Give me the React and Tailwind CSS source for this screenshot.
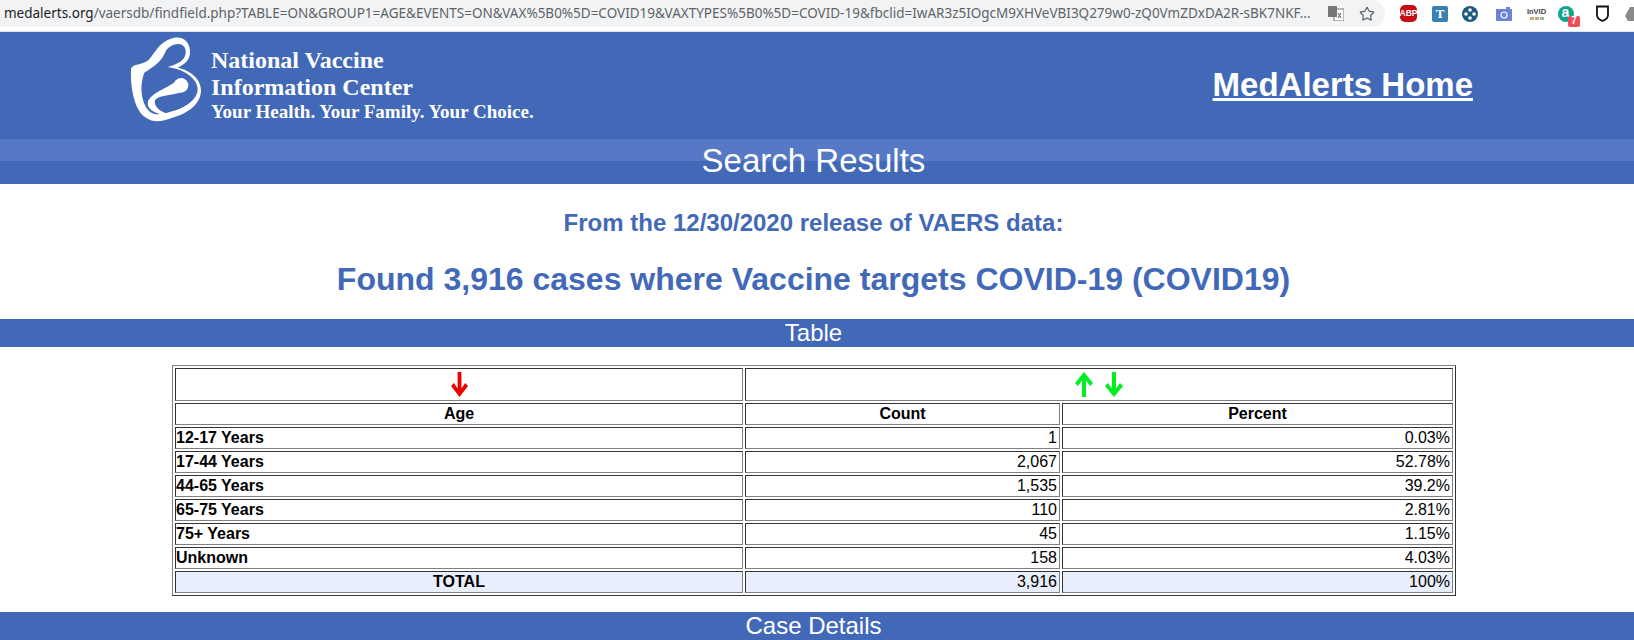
import { Star } from 'lucide-react';

const rows = [
  { age: '12-17 Years', count: '1', percent: '0.03%' },
  { age: '17-44 Years', count: '2,067', percent: '52.78%' },
  { age: '44-65 Years', count: '1,535', percent: '39.2%' },
  { age: '65-75 Years', count: '110', percent: '2.81%' },
  { age: '75+ Years', count: '45', percent: '1.15%' },
  { age: 'Unknown', count: '158', percent: '4.03%' },
];

const cell = 'border border-t-[#333333] border-l-[#333333] border-r-[#808080] border-b-[#808080] py-0 h-[22px] text-[16px] leading-[18px] text-black';

const Arrow = ({ color, down, narrow }) => (
  <svg width={narrow ? 17 : 18} height="25" viewBox="0 0 18 25" preserveAspectRatio="none" className={down ? 'rotate-180' : ''}>
    <polygon points="9,0 18,11 15,14 11,8.5 11,25 7,25 7,8.5 3,14 0,11" fill={color} />
  </svg>
);

// NVIC mother and child logo
const Logo = () => (
  <svg width="85" height="92" viewBox="0 0 255 276" className="shrink-0">
    <path
      fill="#ffffff"
      fillRule="evenodd"
      d="M18 110 C25 95 50 100 70 85 C90 65 100 30 145 18 C175 12 195 30 195 60 C195 85 180 95 158 107 C195 115 228 140 228 175 C228 215 190 245 140 258 C110 270 80 272 60 255 C30 235 15 170 18 110 Z M58 122 C78 108 108 92 120 62 C128 42 155 32 170 38 C186 46 186 70 172 84 C160 96 140 100 128 106 C175 110 218 140 218 172 C218 200 185 228 135 240 C115 246 95 250 80 243 C52 225 40 170 58 122 Z"
    />
    <path fill="#ffffff" d="M150 150 C120 172 85 180 70 205 C60 232 95 252 145 250 C115 245 85 228 90 205 C97 190 135 192 172 180 Z" />
    <circle cx="168" cy="160" r="22" fill="#ffffff" />
  </svg>
);

const Toolbar = () => (
  <div className="flex h-[32px] items-start bg-white border-b border-[#e3e5e8]">
    <div className="flex h-[27px] w-[1385px] shrink-0 items-center rounded-r-full bg-[#f1f3f4] pl-[4px] text-[13.5px] font-['Noto_Sans',sans-serif] text-[#5f6368] whitespace-nowrap">
      <span className="w-[1308px] shrink-0">
        <span className="text-[#202124]">medalerts.org</span>/vaersdb/findfield.php?TABLE=ON&amp;GROUP1=AGE&amp;EVENTS=ON&amp;VAX%5B0%5D=COVID19&amp;VAXTYPES%5B0%5D=COVID-19&amp;fbclid=IwAR3z5IOgcM9XHVeVBI3Q279w0-zQ0VmZDxDA2R-sBK7NKF...
      </span>
      {/* translate icon */}
      <svg width="16" height="15" viewBox="0 0 16 15" className="ml-[16px] shrink-0">
        <rect x="6" y="3" width="10" height="12" fill="#ffffff" stroke="#777777" />
        <rect x="0" y="0" width="9" height="11" fill="#777777" />
        <path d="M10 7 L13 12 M13 7 L10 12" stroke="#777777" strokeWidth="1.2" />
      </svg>
      <Star size={16} strokeWidth={1.8} className="ml-[15px] shrink-0 text-[#5f6368]" />
    </div>
    <div className="relative flex h-[27px] items-center">
      {/* AdBlock Plus */}
      <div className="ml-[15px] flex h-[17px] w-[17px] items-center justify-center rounded-[5px] bg-[#c70d18] font-['Liberation_Sans',sans-serif] text-[8.5px] font-bold text-white">ABP</div>
      {/* T extension */}
      <div className="ml-[15px] flex h-[16px] w-[16px] items-center justify-center rounded-[2px] bg-[#3b80b5] font-['Liberation_Serif',serif] text-[13px] font-bold text-white">T</div>
      {/* round dots */}
      <svg width="16" height="16" viewBox="0 0 16 16" className="ml-[14px]">
        <circle cx="8" cy="8" r="8" fill="#1d5a80" />
        <circle cx="8" cy="4" r="1.8" fill="#ffffff" />
        <circle cx="8" cy="12" r="1.8" fill="#ffffff" />
        <circle cx="4" cy="8" r="1.8" fill="#ffffff" />
        <circle cx="12" cy="8" r="1.8" fill="#ffffff" />
      </svg>
      {/* camera */}
      <svg width="16" height="14" viewBox="0 0 16 14" className="ml-[18px]">
        <rect x="0" y="2" width="16" height="12" fill="#6b83d8" />
        <rect x="10" y="0" width="4" height="3" fill="#6b83d8" />
        <circle cx="8" cy="8" r="3" fill="none" stroke="#ffffff" strokeWidth="1.2" />
      </svg>
      {/* InVID */}
      <div className="ml-[16px] flex w-[17px] flex-col items-center">
        <span className="font-['Liberation_Sans',sans-serif] text-[7.5px] font-bold leading-[8px] text-[#444444]">InVID</span>
        <div className="mt-px flex gap-px">
          <span className="h-[3px] w-[4px] bg-[#d8a878]" />
          <span className="h-[3px] w-[4px] bg-[#b0b080]" />
          <span className="h-[3px] w-[4px] bg-[#99bb99]" />
        </div>
      </div>
      {/* green a with badge */}
      <div className="relative ml-[13px] flex h-[16px] w-[16px] items-center justify-center rounded-full bg-[#0ea58f] pb-[3px] pr-px font-['Liberation_Sans',sans-serif] text-[14px] font-bold leading-none text-white">
        a
        <span className="absolute left-[10px] top-[10px] flex h-[11px] w-[12px] items-center justify-center rounded-[2px] bg-[#f04d5a] text-[10px] text-white">7</span>
      </div>
      {/* shield */}
      <svg width="13" height="17" viewBox="0 0 13 17" className="ml-[22px]">
        <path d="M1 1.5 H12 V10 C12 13 9 15 6.5 16 C4 15 1 13 1 10 Z" fill="#ffffff" stroke="#111111" strokeWidth="1.8" />
      </svg>
      {/* drive, cut off by the window edge */}
      <svg width="9" height="14" viewBox="0 0 9 14" className="ml-[16px]">
        <path d="M5 0 H9 V14 H3 L0 9 Z" fill="#8a8a8a" />
      </svg>
    </div>
  </div>
);

const App = () => {
  return (
    <div className="w-[1634px] h-[640px] overflow-hidden bg-white font-['Liberation_Sans',Arial,sans-serif]">
      <Toolbar />

      <header className="flex h-[107px] items-center justify-between bg-[#4269b7] pl-[125px] pr-[161px] text-white">
        <div className="flex items-start gap-[1px] self-start">
          <Logo />
          <div className="flex flex-col pt-[15px] font-['Liberation_Serif',serif] font-bold">
            <span className="text-[24px] leading-[27px]">National Vaccine</span>
            <span className="text-[24px] leading-[27px]">Information Center</span>
            <span className="text-[19px] leading-[21px]">Your Health. Your Family. Your Choice.</span>
          </div>
        </div>
        <a href="#" className="-mt-[2px] text-[33px] leading-[37px] font-bold underline">MedAlerts Home</a>
      </header>

      <div className="h-[45px] bg-[linear-gradient(#5579c4_22px,#4269b7_22px)] pr-[7px] text-center text-[33px] leading-[44px] text-white">
        Search Results
      </div>

      <main>
        <h2 className="mt-[25px] pr-[7px] text-center text-[24px] leading-[28px] font-bold text-[#4269b7]">
          From the 12/30/2020 release of VAERS data:
        </h2>
        <h1 className="mt-[24px] pr-[7px] text-center text-[32px] leading-[37px] font-bold text-[#4269b7]">
          Found 3,916 cases where Vaccine targets COVID-19 (COVID19)
        </h1>

        <div className="mt-[21px] h-[28px] bg-[#4269b7] pr-[7px] text-center text-[24px] leading-[28px] text-white">Table</div>

        <table className="mt-[18px] ml-[172px] w-[1283px] table-fixed border-separate border-spacing-[2px] border border-t-[#808080] border-l-[#808080] border-r-[#333333] border-b-[#333333]">
          <colgroup>
            <col className="w-[568px]" />
            <col className="w-[315px]" />
            <col className="w-[391px]" />
          </colgroup>
          <tbody>
            <tr>
              <td className={cell + ' !h-[33px] p-0'}>
                <div className="flex justify-center"><Arrow color="#ee0000" down narrow /></div>
              </td>
              <td colSpan={2} className={cell + ' !h-[33px] p-0'}>
                <div className="flex justify-center gap-[12px]">
                  <Arrow color="#00ee22" />
                  <Arrow color="#00ee22" down />
                </div>
              </td>
            </tr>
            <tr>
              <th className={cell + ' px-0 font-bold text-center'}>Age</th>
              <th className={cell + ' px-0 font-bold text-center'}>Count</th>
              <th className={cell + ' px-0 font-bold text-center'}>Percent</th>
            </tr>
            {rows.map((r) => (
              <tr key={r.age}>
                <td className={cell + ' px-0 font-bold text-left'}>{r.age}</td>
                <td className={cell + ' pl-0 pr-[2px] text-right'}>{r.count}</td>
                <td className={cell + ' pl-0 pr-[2px] text-right'}>{r.percent}</td>
              </tr>
            ))}
            <tr className="bg-[#e8eefb]">
              <td className={cell + ' px-0 font-bold text-center'}>TOTAL</td>
              <td className={cell + ' pl-0 pr-[2px] text-right'}>3,916</td>
              <td className={cell + ' pl-0 pr-[2px] text-right'}>100%</td>
            </tr>
          </tbody>
        </table>

        <div className="mt-[16px] h-[28px] bg-[#4269b7] pr-[7px] text-center text-[24px] leading-[28px] text-white">Case Details</div>
      </main>
    </div>
  );
};

export default App;
